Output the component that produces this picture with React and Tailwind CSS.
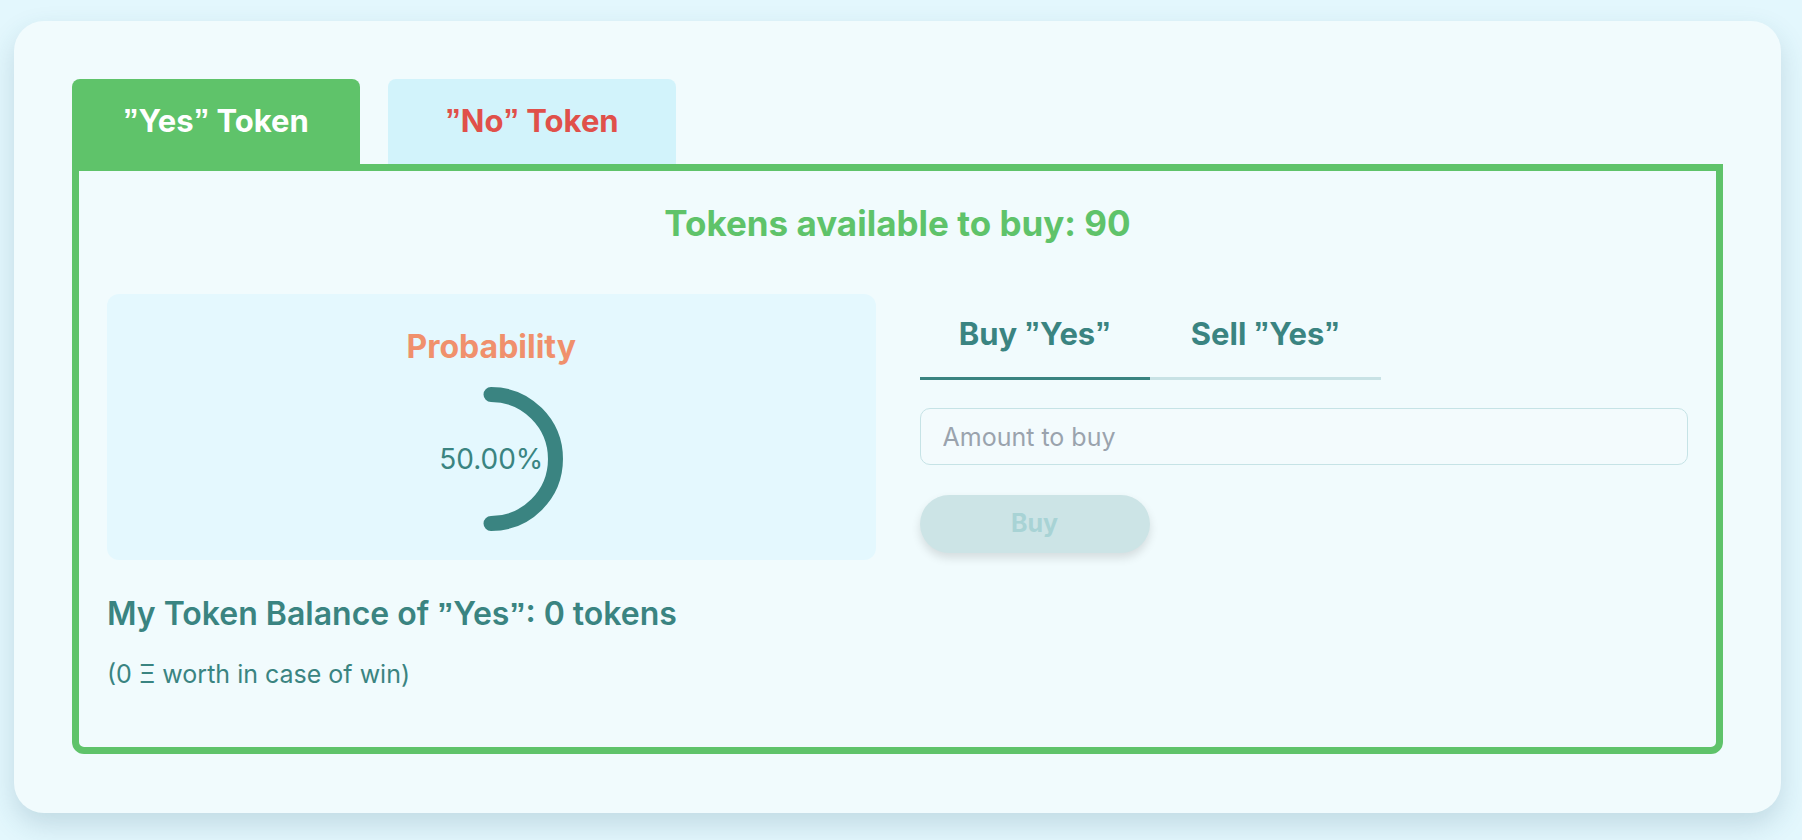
import React, { useState } from 'react';

// curly quote rendered in a font that draws it as a real ” glyph
const Q = () => <span className="font-['Liberation_Sans',Arial,sans-serif]">”</span>;

const Gauge = ({ value }) => {
  const r = 64.5;
  const c = 80;
  return (
    <div className="relative w-[160px] h-[160px]">
      <svg width="160" height="160" viewBox="0 0 160 160">
        <path
          d={`M ${c} ${c - r} A ${r} ${r} 0 0 1 ${c} ${c + r}`}
          fill="none"
          stroke="#3a8481"
          strokeWidth="15"
          strokeLinecap="round"
        />
      </svg>
      <div className="absolute inset-0 flex items-center justify-center text-[28px] text-[#3a8481]">
        {value.toFixed(2)}%
      </div>
    </div>
  );
};

export default function App() {
  const [token, setToken] = useState('YES');
  const [mode, setMode] = useState('BUY');

  return (
    <div className="min-h-screen bg-[#e3f7fd] pt-[21px] pl-[14px] pr-[21px] pb-[27px] font-['Inter','Noto_Sans',sans-serif]">
      <div className="bg-[#f1fbfd] rounded-[30px] shadow-[0_12px_28px_rgba(40,90,110,0.18)] p-[58px] pb-[59px]">
        <div className="flex gap-[28px]">
          <button
            onClick={() => setToken('YES')}
            className="w-[288px] h-[85px] rounded-t-[8px] bg-[#5fc36a] text-white text-[31px] font-bold flex items-center justify-center"
          >
            <Q />Yes<Q />&nbsp;Token
          </button>
          <button
            onClick={() => setToken('NO')}
            className="w-[288px] h-[85px] rounded-t-[8px] bg-[#d2f3fb] text-[#e0504a] text-[31px] font-bold flex items-center justify-center"
          >
            <Q />No<Q />&nbsp;Token
          </button>
        </div>

        <div className="border-[7px] border-[#5fc36a] rounded-b-[12px] pt-[28px] px-[28px] pb-[56px]">
          <h2 className="text-center text-[35px] leading-[48px] font-bold text-[#5fc36a]">
            Tokens available to buy: 90
          </h2>

          <div className="grid grid-cols-2 gap-[44px] mt-[47px]">
            <div className="bg-[#e4f8fe] rounded-[12px] h-[266px] flex flex-col items-center pt-[30px]">
              <p className="text-[32px] leading-[45px] font-bold text-[#f0906c]">Probability</p>
              <div className="mt-[10px]">
                <Gauge value={50} />
              </div>
            </div>

            <div>
              <div className="flex w-[461px]">
                {[
                  { id: 'BUY', label: 'Buy' },
                  { id: 'SELL', label: 'Sell' },
                ].map((tab) => (
                  <button
                    key={tab.id}
                    onClick={() => setMode(tab.id)}
                    className={`flex-1 h-[86px] flex items-center justify-center text-[31px] font-bold text-[#3a8481] border-b-[3px] pb-[3px] ${
                      mode === tab.id ? 'border-[#3a8481]' : 'border-[#c8e2e5]'
                    }`}
                  >
                    {tab.label}&nbsp;<Q />Yes<Q />
                  </button>
                ))}
              </div>

              <input
                placeholder="Amount to buy"
                className="mt-[28px] w-full h-[57px] rounded-[10px] border border-[#c6e3e6] bg-[#f3fbfd] px-[22px] text-[25px] text-[#3a8481] placeholder:text-[#9aa3ad] outline-none font-['Inter','Noto_Sans',sans-serif]"
              />

              <button
                disabled
                className="mt-[30px] w-[230px] h-[58px] rounded-full bg-[#cce4e6] text-[#a8d3d5] text-[25px] font-bold shadow-[0_5px_10px_rgba(0,0,0,0.12)]"
              >
                Buy
              </button>
            </div>
          </div>

          <p className="mt-[31px] text-[32px] leading-[45px] font-semibold text-[#3a8481]">
            My Token Balance of <Q />Yes<Q />: 0 tokens
          </p>
          <p className="mt-[21px] text-[25px] leading-[33px] text-[#3a8481]">(0 Ξ worth in case of win)</p>
        </div>
      </div>
    </div>
  );
}
